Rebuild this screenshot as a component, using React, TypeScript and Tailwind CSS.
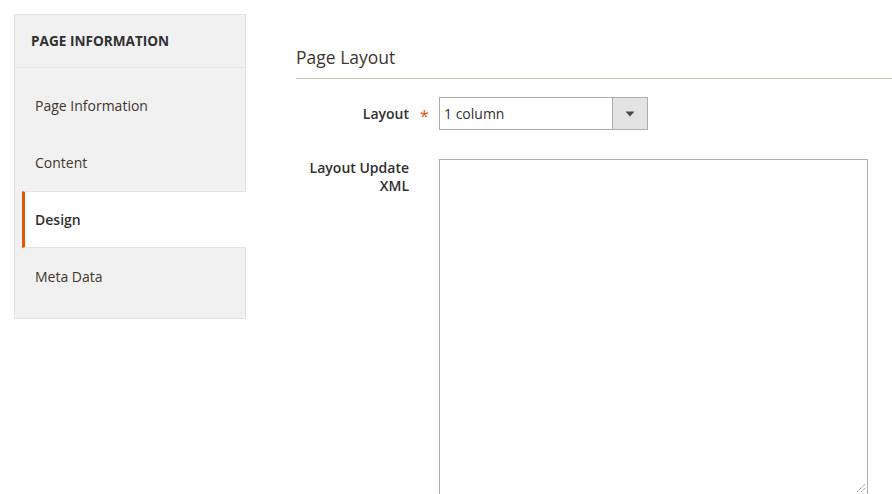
import React from "react";

const items = [
  { label: "Page Information", active: false },
  { label: "Content", active: false },
  { label: "Design", active: true },
  { label: "Meta Data", active: false },
];

export default function App() {
  return (
    <div
      className="w-[892px] h-[494px] overflow-hidden bg-white flex items-start pl-[14px] pt-[14px] text-[14px] text-[#303030]"
      style={{ fontFamily: '"Open Sans", "Liberation Sans", sans-serif' }}
    >
      <div className="w-[232px] shrink-0 border border-[#e3e3e3] bg-[#f1f1f1] pt-0 pb-[13px]">
        <div className="h-[53px] border-b border-[#e3e3e3] flex items-center pl-[16px] pt-[1px] font-bold uppercase text-[13.6px] text-[#303030]">
          Page Information
        </div>
        <div className="pt-[9px]">
          {items.map((it) =>
            it.active ? (
              <div
                key={it.label}
                className="h-[57px] ml-[7px] mr-[-1px] bg-white border-l-[3px] border-l-[#eb5202] border-y border-y-[#e3e3e3] flex items-center pl-[10px] font-semibold text-[#303030]"
              >
                {it.label}
              </div>
            ) : (
              <div
                key={it.label}
                className="h-[57px] flex items-center pl-[20px] text-[#41362f]"
              >
                {it.label}
              </div>
            )
          )}
        </div>
      </div>

      <div className="flex-1 ml-[50px] pt-[31px]">
        <div className="border-b border-[#cac3b4] pb-[9px]">
          <h2 className="text-[17.5px] leading-[24px] font-normal text-[#41362f]">Page Layout</h2>
        </div>

        <div className="flex mt-[18px] items-center">
          <div className="w-[113px] text-right font-semibold leading-[18px]">Layout</div>
          <div className="w-[30px] flex justify-center pl-[1px] text-[#eb5202] text-[16px] leading-none pt-[4px]">*</div>
          <div className="w-[209px] h-[33px] border border-[#adadad] flex">
            <div className="flex-1 flex items-center pl-[4px] text-[#303030]">1 column</div>
            <div className="w-[35px] bg-[#e3e3e3] border-l border-[#adadad] flex items-center justify-center">
              <svg width="10" height="6" viewBox="0 0 10 6">
                <path d="M0.5 0.5 H9.5 L5 5.5 Z" fill="#514943" />
              </svg>
            </div>
          </div>
        </div>

        <div className="flex mt-[29px] items-start">
          <div className="w-[113px] text-right font-semibold leading-[18px] pt-0">Layout Update XML</div>
          <div className="w-[30px]" />
          <div className="relative w-[429px] h-[336px] border border-[#adadad] bg-white">
            <svg className="absolute right-[1px] bottom-[1px]" width="12" height="12" viewBox="0 0 12 12">
              <path d="M11 3 L3 11 M11 7 L7 11" stroke="#777" strokeWidth="1" strokeDasharray="1 1" />
            </svg>
          </div>
        </div>
      </div>
    </div>
  );
}
